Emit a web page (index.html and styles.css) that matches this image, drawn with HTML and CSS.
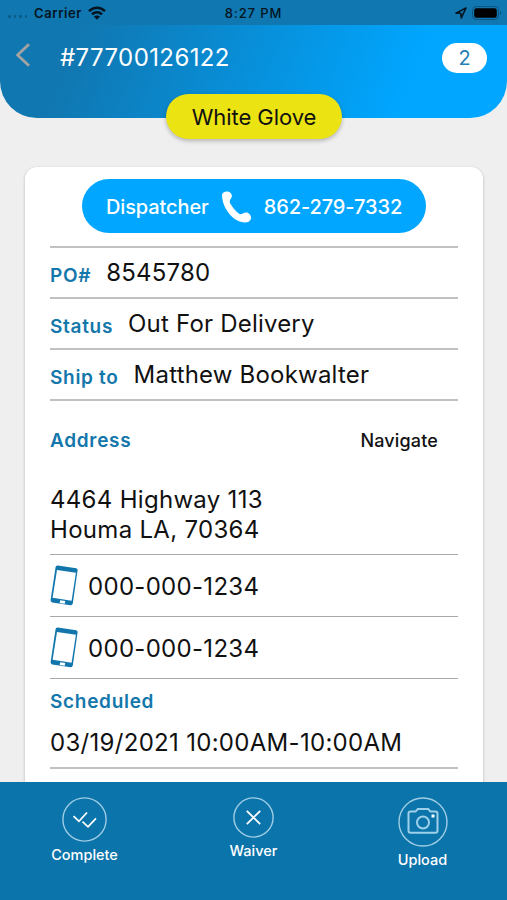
FILE: index.html
```
<!DOCTYPE html>
<html lang="en">
<head>
    <meta charset="UTF-8">
    <meta name="viewport" content="width=device-width, initial-scale=1.0">
    <title>Order #77700126122</title>
    <link rel="stylesheet" href="styles.css">
</head>
<body>
    <div class="screen">
        <header class="header">
            <div class="status-bar">
                <div class="carrier">
                    <span class="signal"><i></i><i></i><i></i><i></i></span>
                    <span>Carrier</span>
                    <svg class="wifi" width="18" height="14" viewBox="0 0 18 14">
                        <g fill="none" stroke="#03141f" stroke-width="2.6">
                            <path d="M1 5.2C5.6.6 12.4.6 17 5.2"/>
                            <path d="M4 8.4c3-2.8 7-2.8 10 0"/>
                        </g>
                        <path d="M9 13.8 5.9 10.6c1.8-1.5 4.4-1.5 6.2 0z" fill="#03141f"/>
                    </svg>
                </div>
                <div class="clock">8:27 PM</div>
                <div class="indicators">
                    <svg width="12" height="12" viewBox="0 0 12 12">
                        <path d="M1 6.1 11 1 6.3 11 5.8 6.3z" fill="none" stroke="#03141f" stroke-width="1.6" stroke-linejoin="round"/>
                    </svg>
                    <svg width="30" height="14" viewBox="0 0 30 14">
                        <rect x=".5" y=".5" width="26" height="13" rx="3.8" fill="none" stroke="#0b5580"/>
                        <rect x="2.2" y="2.2" width="22.6" height="9.6" rx="2.2"/>
                        <path d="M28 4.8c1.5.7 1.5 3.7 0 4.4z" fill="#0b5580"/>
                    </svg>
                </div>
            </div>
            <div class="nav-bar">
                <svg class="back" width="16" height="24" viewBox="0 0 16 24">
                    <path d="M14 1.200 2.600 12 14 22.800" fill="none" stroke="#a3a3a3" stroke-width="2.8"/>
                </svg>
                <h1>#77700126122</h1>
                <span class="count">2</span>
            </div>
            <div class="service">White Glove</div>
        </header>

        <main class="card">
            <div class="dispatcher">
                <span>Dispatcher</span>
                <svg width="31" height="32" viewBox="0 0 31 32">
                    <path d="M1 4C1 2 3.500 .4 6 .4c2.600 0 4.700 1.700 4.900 4.300.2 1.500-1.200 2.900-1.900 4.500-.5 1.300-.2 2.500.6 3.900 2 3.600 4.700 6.800 7.800 9.200 1.300 1 2.600 1.200 4 .5 1.900-1 3.800-1.700 5.700-.7 2.400 1.300 3.500 4 2.700 6.200-.8 2.200-3.500 3.400-6.400 3.200C16 31 9.300 25.500 5 18 2.500 13.600 1 8.800 1 4z" fill="#fff"/>
                </svg>
                <span>862-279-7332</span>
            </div>

            <div class="row">
                <span class="label">PO#</span>
                <span class="value">8545780</span>
            </div>
            <div class="row">
                <span class="label">Status</span>
                <span class="value">Out For Delivery</span>
            </div>
            <div class="row">
                <span class="label">Ship to</span>
                <span class="value">Matthew Bookwalter</span>
            </div>

            <section class="address">
                <div class="address-head">
                    <span class="label">Address</span>
                    <span class="navigate">Navigate</span>
                </div>
                <div class="value">4464 Highway 113<br>Houma LA, 70364</div>
            </section>

            <div class="phone">
                <svg width="28" height="41" viewBox="0 0 28 41">
                    <path fill="#1276ad" fill-rule="evenodd" d="M7.800.4 26.200 3.300q1.600.3 1.400 2L22.800 38.500q-.4 2-2.300 1.800L2.200 37.400Q.4 37 .6 35L5.600 2Q6 .2 7.800.4zM7 5 2.600 32.800 21.600 35.700 25.900 7.700zM10.200 35.200 9.700 38 14.700 38.800 15.200 36z"/>
                </svg>
                <span class="value">000-000-1234</span>
            </div>
            <div class="phone">
                <svg width="28" height="41" viewBox="0 0 28 41">
                    <path fill="#1276ad" fill-rule="evenodd" d="M7.800.4 26.200 3.300q1.600.3 1.400 2L22.800 38.500q-.4 2-2.300 1.800L2.200 37.400Q.4 37 .6 35L5.600 2Q6 .2 7.800.4zM7 5 2.600 32.800 21.600 35.700 25.900 7.700zM10.200 35.200 9.700 38 14.700 38.800 15.200 36z"/>
                </svg>
                <span class="value">000-000-1234</span>
            </div>

            <section class="scheduled">
                <div class="label">Scheduled</div>
                <div class="value">03/19/2021 10:00AM-10:00AM</div>
            </section>
        </main>

        <footer class="actions">
            <div class="action">
                <svg width="45" height="45" viewBox="0 0 45 45">
                    <circle cx="22.500" cy="22.500" r="21.600"/>
                    <path d="M11.500 19.200 17 24.300 25 15.500M20.500 24.600 26 29.800 34 21.300" class="mark"/>
                </svg>
                <span>Complete</span>
            </div>
            <div class="action">
                <svg width="41" height="41" viewBox="0 0 41 41">
                    <circle cx="20.500" cy="20.500" r="19.600"/>
                    <path d="M13.800 13.800 27.200 27.200M27.200 13.800 13.800 27.200" class="mark"/>
                </svg>
                <span>Waiver</span>
            </div>
            <div class="action">
                <svg width="50" height="50" viewBox="0 0 50 50">
                    <circle cx="25" cy="25" r="24"/>
                    <path d="M12.500 14.600h5l2.300-2.600h10.400l2.300 2.600h5q2 0 2 2v17.200q0 2-2 2h-25q-2 0-2-2v-17.200q0-2 2-2z" class="camera"/>
                    <circle cx="25" cy="25.500" r="6" class="camera"/>
                    <rect x="33.500" y="17.500" width="3" height="3" class="flash"/>
                </svg>
                <span>Upload</span>
            </div>
        </footer>
    </div>
</body>
</html>
```
FILE: styles.css
```
:root {
    --blue: #0b74aa;
    --bright: #00a6ff;
    --label: #1477ab;
    --line: #c1c1c1;
}

* {
    box-sizing: border-box;
}

body {
    margin: 0;
    font-family: Inter, "Liberation Sans", sans-serif;
    background-color: #efefef;
    color: #111;
}

.screen {
    height: 900px;
    display: flex;
    flex-direction: column;
    overflow: hidden;
}

/* Header */
.header {
    position: relative;
    flex: none;
    height: 118px;
    border-radius: 0 0 37px 37px;
    background: linear-gradient(112deg, #1077b1 17%, var(--bright) 80%);
}

.status-bar {
    display: grid;
    grid-template-columns: 1fr auto 1fr;
    align-items: center;
    height: 25px;
    padding: 1px 8px 0 8px;
    background-color: #1077b0;
    color: #03141f;
    font-size: 13px;
    font-weight: 600;
    letter-spacing: 0.6px;
}

.clock {
    font-weight: 500;
    letter-spacing: 0.9px;
}

.carrier,
.indicators {
    display: flex;
    align-items: center;
}

.signal {
    display: flex;
    gap: 3px;
    margin: 7px 7px 0 0;
}

.signal i {
    width: 2.500px;
    height: 2.500px;
    border-radius: 50%;
    background-color: #0c5a86;
}

.wifi {
    margin-left: 6px;
}

.indicators {
    justify-content: flex-end;
    gap: 5px;
    margin-right: -3px;
}

.nav-bar {
    display: flex;
    align-items: center;
    height: 65px;
    padding: 0 20px 0 15px;
}

.back {
    margin-top: -6px;
}

h1 {
    flex: 1;
    margin: 0 0 0 29px;
    color: white;
    font-size: 24px;
    font-weight: 400;
    letter-spacing: 0.4px;
}

.count {
    width: 45px;
    height: 30px;
    margin-top: 1px;
    border-radius: 15px;
    background-color: white;
    color: #2480b4;
    font-size: 20px;
    line-height: 31px;
    text-align: center;
}

.service {
    position: absolute;
    left: 166px;
    top: 94px;
    width: 176px;
    height: 45px;
    border-radius: 23px;
    background-color: #ebe312;
    box-shadow: 0 2px 4px rgba(0,0,0,0.25);
    font-size: 22px;
    line-height: 47px;
    letter-spacing: -0.05px;
    text-align: center;
}

/* Order card */
.card {
    flex: 1;
    min-height: 0;
    margin: 49px 24px 0 25px;
    padding: 12px 25px 0;
    border-radius: 12px 12px 0 0;
    background-color: white;
    box-shadow: 0 1px 3px rgba(0,0,0,0.25);
}

.dispatcher {
    display: flex;
    align-items: center;
    justify-content: center;
    gap: 12px;
    width: 344px;
    height: 54px;
    padding-top: 1px;
    margin: 0 auto 13px 32px;
    border-radius: 27px;
    background-color: var(--bright);
    color: white;
    font-size: 20px;
    font-weight: 500;
    letter-spacing: -0.1px;
}

.label {
    color: var(--label);
    font-size: 19px;
    font-weight: 600;
    letter-spacing: 0.7px;
}

.value {
    font-size: 24px;
    line-height: 29px;
    letter-spacing: 0.3px;
}

.row {
    display: flex;
    align-items: baseline;
    gap: 15px;
    height: 51px;
    padding-top: 10px;
    border-top: 2px solid var(--line);
}

.row .label {
    position: relative;
    top: 1px;
}

.row .value {
    letter-spacing: 0.2px;
}

.address {
    height: 155px;
    padding-top: 28px;
    border-top: 2px solid var(--line);
}

.address-head {
    display: flex;
    justify-content: space-between;
    padding-right: 20px;
    margin-bottom: 33px;
    line-height: 23px;
}

.address .value {
    line-height: 29.500px;
}

.navigate {
    font-size: 18px;
    font-weight: 500;
    letter-spacing: 0.15px;
}

.phone {
    display: flex;
    align-items: center;
    gap: 10px;
    height: 62px;
    padding-top: 1px;
    border-top: 1px solid #aaa;
}

.phone svg {
    margin-top: -1px;
}

.scheduled {
    height: 91px;
    padding-top: 11px;
    border-top: 1px solid #aaa;
    border-bottom: 2px solid var(--line);
}

.scheduled .label {
    line-height: 23px;
    margin-bottom: 15px;
}

/* Bottom actions */
.actions {
    flex: none;
    display: flex;
    position: relative;
    height: 118px;
    padding-top: 15px;
    background-color: var(--blue);
    color: white;
    font-size: 14.500px;
    font-weight: 500;
}

.action {
    flex: 1;
    display: flex;
    flex-direction: column;
    align-items: center;
    gap: 3px;
    line-height: 20px;
}

.action circle,
.action path {
    fill: none;
    stroke: #9fcde5;
    stroke-width: 1.4;
}

.action .mark {
    stroke: white;
    stroke-width: 1.8;
}

.action .camera {
    stroke: #9fd0ea;
    stroke-width: 2;
}

.action .flash {
    fill: white;
}
```
